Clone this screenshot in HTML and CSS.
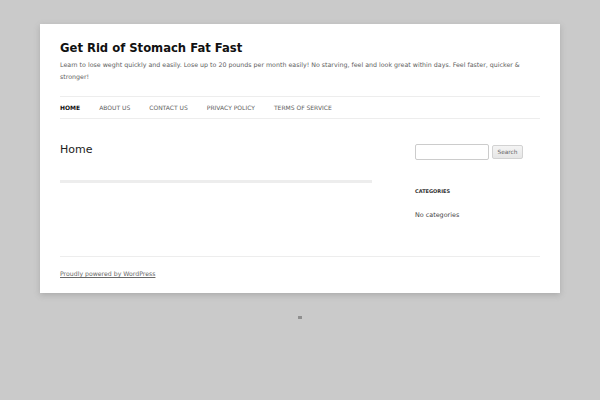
FILE: index.html
```html
<!DOCTYPE html>
<html lang="en">
<head>
    <meta charset="UTF-8">
    <title>Get Rid of Stomach Fat Fast</title>
    <link rel="stylesheet" href="styles.css">
</head>
<body>

    <div class="site">
        <header class="site-header">
            <h1 class="site-title">Get Rid of Stomach Fat Fast</h1>
            <p class="site-description">Learn to lose weght quickly and easily. Lose up to 20 pounds per month easily! No starving, feel and look great within days. Feel faster, quicker &amp; stronger!</p>
            <nav class="main-nav">
                <a href="#" class="current">Home</a>
                <a href="#">About Us</a>
                <a href="#">Contact Us</a>
                <a href="#">Privacy Policy</a>
                <a href="#">Terms of Service</a>
            </nav>
        </header>

        <div class="main">
            <div class="content">
                <h2 class="entry-title">Home</h2>
                <div class="entry-line"></div>
            </div>
            <aside class="sidebar">
                <form class="search-form">
                    <input type="text">
                    <button type="button">Search</button>
                </form>
                <h3 class="widget-title">Categories</h3>
                <p class="widget-text">No categories</p>
            </aside>
        </div>

        <footer class="site-footer">
            <a href="#">Proudly powered by WordPress</a>
        </footer>
    </div>

    <div class="stat"></div>

</body>
</html>
```

FILE: styles.css
```css
body {
    margin: 0;
    padding: 24px 0 0;
    background-color: #cacaca;
    font-family: "DejaVu Sans", sans-serif;
    color: #444;
}
.site {
    width: 480px;
    margin: 0 auto;
    padding: 0 20px;
    background: #fff;
    box-shadow: 0 2px 6px rgba(100, 100, 100, 0.3);
}
.site-header {
    padding-top: 15px;
}
.site-title {
    margin: 0;
    font-size: 11.6px;
    line-height: 18px;
    color: #111;
}
.site-description {
    margin: 2px 0 0;
    font-size: 6.3px;
    line-height: 12px;
    color: #5e5e5e;
}
.main-nav {
    display: flex;
    gap: 19px;
    margin-top: 13px;
    border-top: 1px solid #ededed;
    border-bottom: 1px solid #ededed;
    height: 21px;
    align-items: center;
}
.main-nav a {
    font-size: 6px;
    text-transform: uppercase;
    color: #5e5e5e;
    text-decoration: none;
}
.main-nav a.current {
    color: #111;
    font-weight: bold;
}
.main {
    display: flex;
    justify-content: space-between;
    padding-top: 23px;
    padding-bottom: 36px;
    border-bottom: 1px solid #ededed;
}
.content {
    width: 312px;
}
.entry-title {
    margin: 0;
    font-size: 11px;
    font-weight: normal;
    line-height: 16px;
    color: #222;
}
.entry-line {
    margin-top: 22px;
    height: 3px;
    background: #ededed;
}
.sidebar {
    width: 125px;
    padding-top: 2px;
}
.search-form {
    display: flex;
    gap: 3px;
    align-items: center;
}
.search-form input {
    width: 70px;
    height: 12px;
    padding: 1px;
    border: 1px solid #ccc;
    border-radius: 2px;
    margin: 0;
}
.search-form button {
    width: 31px;
    height: 14px;
    padding: 0;
    font-family: "DejaVu Sans", sans-serif;
    font-size: 5.8px;
    color: #666;
    border: 1px solid #d2d2d2;
    border-radius: 2px;
    background: linear-gradient(#f4f4f4, #e6e6e6);
}
.widget-title {
    margin: 26px 0 0;
    font-size: 5px;
    text-transform: uppercase;
    color: #333;
    line-height: 10px;
}
.widget-text {
    margin: 14px 0 0;
    font-size: 6.4px;
    line-height: 10px;
    color: #444;
}
.site-footer {
    padding: 12px 0 14px;
    font-size: 6.2px;
    line-height: 10px;
}
.site-footer a {
    color: #686868;
}
.stat {
    width: 4px;
    height: 3px;
    margin: 23px auto 0;
    background: #8f8f8f;
}
```
